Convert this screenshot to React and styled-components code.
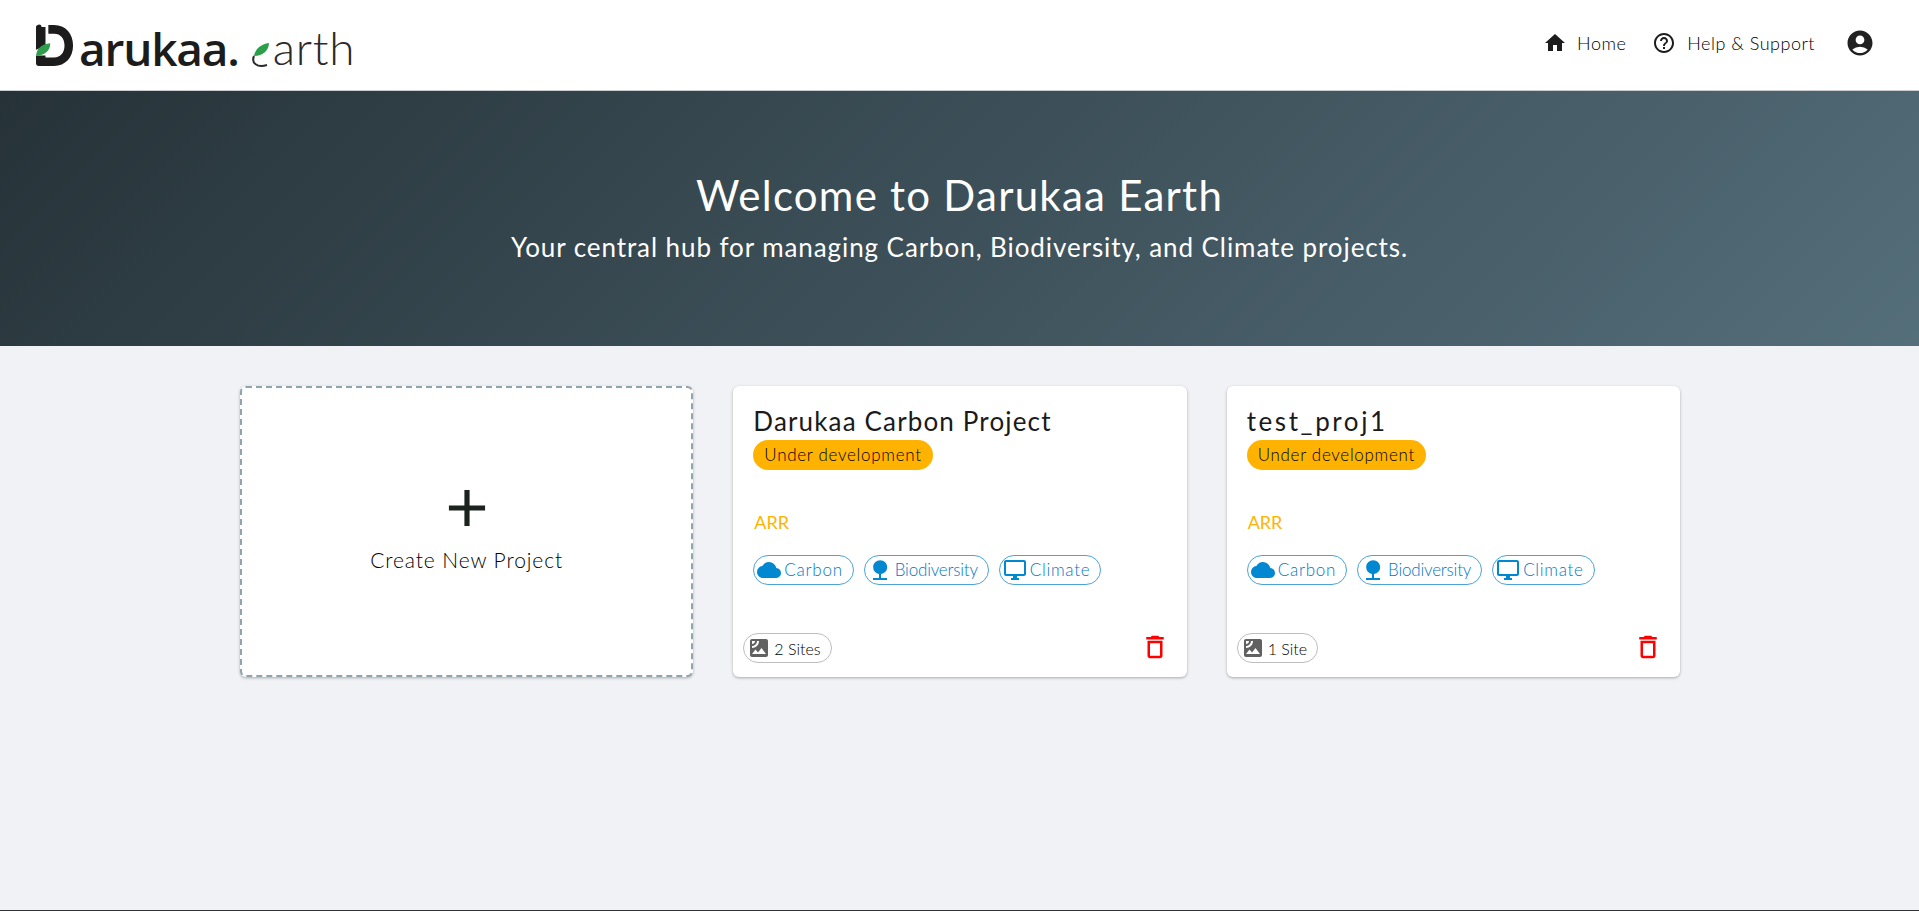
import React from 'react'
import styled, { createGlobalStyle } from 'styled-components'
import {
	MdHome,
	MdOutlineHelpOutline,
	MdAccountCircle,
	MdCloud,
	MdNature,
	MdOutlineDesktopWindows,
	MdSatellite,
	MdOutlineDelete,
	MdAdd,
} from 'react-icons/md'

const GlobalStyle = createGlobalStyle`
	html, body {
		margin: 0;
		padding: 0;
		background: #f0f2f6;
		font-family: Lato, "Open Sans", sans-serif;
		color: #1a1a1a;
	}
	* {
		box-sizing: border-box;
	}
`

const Page = styled.div`
	height: 911px;
	display: flex;
	flex-direction: column;
	overflow: hidden;
	border-bottom: 1px solid #2f3338;
`

const Navbar = styled.header`
	height: 91px;
	flex-shrink: 0;
	display: flex;
	align-items: center;
	justify-content: space-between;
	padding: 0 44px 4px 36px;
	background: #fff;
	border-bottom: 1px solid #c9cdd0;
`

const Logo = styled.div`
	display: flex;
	align-items: flex-end;
	height: 44px;
	margin-top: 6px;
`

const LogoBold = styled.span`
	font-family: 'Open Sans', sans-serif;
	font-size: 46px;
	line-height: 48px;
	font-weight: 600;
	color: #1c1c1c;
	letter-spacing: -1.2px;
	margin: 0 10px 0 5px;
	height: 44px;
`

const LogoLight = styled.span`
	font-family: Lato, sans-serif;
	font-size: 46px;
	line-height: 48px;
	font-weight: 300;
	color: #2a2a2a;
	letter-spacing: 0.8px;
	height: 44px;
`

const Nav = styled.nav`
	display: flex;
	align-items: center;
`

const NavLink = styled.a`
	display: flex;
	align-items: center;
	gap: ${(props) => props.$gap}px;
	margin-right: 26px;
	font-size: 18px;
	font-weight: 300;
	color: #000;
	letter-spacing: 0.5px;
	svg {
		font-size: 24px;
		color: #1c1c1c;
	}
`

const AccountButton = styled.span`
	display: flex;
	margin-left: 4px;
	font-size: 30px;
	color: #212121;
`

const Hero = styled.section`
	height: 255px;
	flex-shrink: 0;
	display: flex;
	flex-direction: column;
	align-items: center;
	padding-top: 80px;
	color: #fff;
	background: linear-gradient(135deg, #263238, #546e7a);
`

const HeroTitle = styled.h1`
	margin: 0;
	font-size: 42px;
	line-height: 48px;
	font-weight: 400;
	letter-spacing: 1.25px;
`

const HeroText = styled.p`
	margin: 12px 0 0;
	font-size: 26px;
	line-height: 32px;
	font-weight: 400;
	letter-spacing: 0.92px;
`

const Grid = styled.main`
	width: 1440px;
	margin: 40px auto 0 240px;
	display: grid;
	grid-template-columns: repeat(3, 453.33px);
	column-gap: 40px;
`

const Card = styled.article`
	height: 291px;
	display: flex;
	flex-direction: column;
	padding: 19px 21px 14px 20px;
	background: #fff;
	border-radius: 6px;
	box-shadow: 0 1px 3px rgba(0, 0, 0, 0.3);
`

const CreateCard = styled(Card)`
	align-items: center;
	justify-content: center;
	padding: 0 0 12px;
	border: 2px dashed #90a4ae;
`

const PlusIcon = styled(MdAdd)`
	font-size: 62px;
	color: #1a231d;
`

const CreateLabel = styled.div`
	margin-top: 7px;
	font-size: 21px;
	line-height: 28px;
	font-weight: 300;
	letter-spacing: 0.9px;
	color: #000;
`

const CardTitle = styled.h2`
	margin: 0;
	font-size: 26px;
	line-height: 32px;
	font-weight: 400;
	letter-spacing: ${(props) => props.$spacing}px;
	color: #1a1a1a;
`

const StatusBadge = styled.div`
	align-self: flex-start;
	height: 30px;
	margin-top: 3px;
	padding: 0 11px 1px;
	display: flex;
	align-items: center;
	border-radius: 15px;
	background: #ffb300;
	font-size: 17px;
	font-weight: 300;
	letter-spacing: 0.7px;
	color: #000;
`

const TypeLabel = styled.div`
	margin: 40px 0 0 1px;
	font-size: 18px;
	line-height: 24px;
	font-weight: 400;
	color: #ffb300;
`

const TagRow = styled.div`
	display: flex;
	gap: 10px;
	margin-top: 21px;
`

const Tag = styled.div`
	height: 30px;
	display: flex;
	align-items: center;
	gap: 3px;
	padding: 0 10px 1px 3px;
	border: 1px solid #4ba3d9;
	border-radius: 15px;
	font-size: 17px;
	font-weight: 300;
	letter-spacing: ${(props) => props.$spacing}px;
	color: #0278c4;
	svg {
		font-size: 24px;
		flex-shrink: 0;
		color: #0288d1;
	}
`

const CardFooter = styled.div`
	margin: auto -4px 0 0;
	display: flex;
	align-items: center;
	justify-content: space-between;
`

const SitesChip = styled.div`
	height: 30px;
	margin-left: -10px;
	display: flex;
	align-items: center;
	gap: 3px;
	padding: 0 10px 0 3px;
	border: 1px solid #bdbdbd;
	border-radius: 15px;
	font-size: 16px;
	font-weight: 300;
	color: #000;
	svg {
		font-size: 24px;
		color: #616161;
	}
`

const DeleteIcon = styled(MdOutlineDelete)`
	font-size: 30px;
	margin-top: -2px;
	color: #ff0000;
`

const LogoMark = () => (
	<svg width="38" height="44" viewBox="0 0 40 44">
		<path d="M0 3 a3 3 0 0 1 6 -1 L10 2 L10 22 L0 26 Z" fill="#1c1c1c" />
		<path
			d="M13 0 H19 C31 0 39 9 39 21.5 C39 34 31 43 19 43 H3 C1 43 0 42 0 40 V32 H10 V34 H19 C26 34 30 29 30 21.5 C30 14 26 9 19 9 H13 Z"
			fill="#1c1c1c"
		/>
		<path d="M0 32 C1 24 6 20 15 19 C15 27 9 32 0 32 Z" fill="#2e9e4b" />
	</svg>
)

const LeafE = () => (
	<svg width="24" height="27" viewBox="0 0 24 27">
		<path d="M5 15 C6 8 12 3 20 2 C20 9 14 15 5 15 Z" fill="#2e9e4b" />
		<path d="M5 15 C2 22 8 27 18 24" fill="none" stroke="#2a2a2a" strokeWidth="2" />
	</svg>
)

const ProjectCard = ({ title, titleSpacing, sites }) => (
	<Card>
		<CardTitle $spacing={titleSpacing}>{title}</CardTitle>
		<StatusBadge>Under development</StatusBadge>
		<TypeLabel>ARR</TypeLabel>
		<TagRow>
			<Tag $spacing={0.75}>
				<MdCloud />
				Carbon
			</Tag>
			<Tag $spacing={-0.2}>
				<MdNature />
				Biodiversity
			</Tag>
			<Tag $spacing={0.7}>
				<MdOutlineDesktopWindows />
				Climate
			</Tag>
		</TagRow>
		<CardFooter>
			<SitesChip>
				<MdSatellite />
				{sites}
			</SitesChip>
			<DeleteIcon />
		</CardFooter>
	</Card>
)

const App = () => {
	return (
		<>
			<GlobalStyle />
			<Page>
				<Navbar>
					<Logo>
						<LogoMark />
						<LogoBold>arukaa.</LogoBold>
						<LeafE />
						<LogoLight>arth</LogoLight>
					</Logo>
					<Nav>
						<NavLink $gap={10}>
							<MdHome />
							Home
						</NavLink>
						<NavLink $gap={11}>
							<MdOutlineHelpOutline />
							Help &amp; Support
						</NavLink>
						<AccountButton>
							<MdAccountCircle />
						</AccountButton>
					</Nav>
				</Navbar>
				<Hero>
					<HeroTitle>Welcome to Darukaa Earth</HeroTitle>
					<HeroText>
						Your central hub for managing Carbon, Biodiversity, and Climate projects.
					</HeroText>
				</Hero>
				<Grid>
					<CreateCard>
						<PlusIcon />
						<CreateLabel>Create New Project</CreateLabel>
					</CreateCard>
					<ProjectCard title="Darukaa Carbon Project" titleSpacing={1.15} sites="2 Sites" />
					<ProjectCard title="test_proj1" titleSpacing={2.6} sites="1 Site" />
				</Grid>
			</Page>
		</>
	)
}

export default App
